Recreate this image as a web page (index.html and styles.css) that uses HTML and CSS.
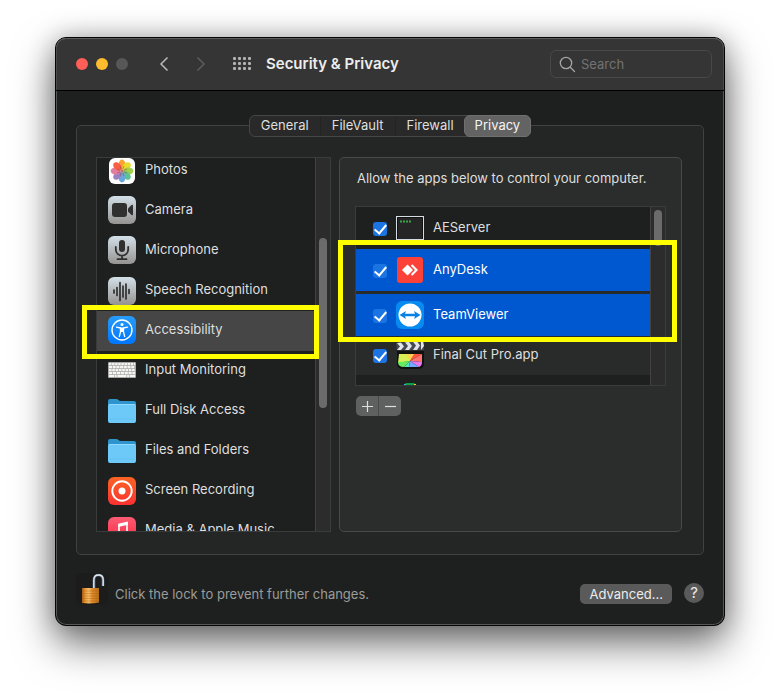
FILE: index.html
```html
<!DOCTYPE html>
<html lang="en">
<head>
<meta charset="utf-8">
<title>Security &amp; Privacy</title>
<link rel="stylesheet" href="styles.css">
</head>
<body>
<main class="window">
  <header class="titlebar">
    <div class="lights">
      <button class="light red" aria-label="Close"></button>
      <button class="light amber" aria-label="Minimize"></button>
      <button class="light off" aria-label="Zoom" disabled></button>
    </div>
    <div class="nav">
      <button class="plain" aria-label="Back"><svg width="10" height="16" viewBox="0 0 10 16"><path d="M8.500 1.500 2 8l6.500 6.500" fill="none" stroke="#b9b9b9" stroke-width="1.500"/></svg></button>
      <button class="plain" aria-label="Forward" disabled><svg width="10" height="16" viewBox="0 0 10 16"><path d="M1.500 1.500 8 8l-6.500 6.500" fill="none" stroke="#5d5d5d" stroke-width="1.500"/></svg></button>
    </div>
    <button class="plain" aria-label="Show All"><svg width="18" height="14" viewBox="0 0 18 14" fill="#b3b3b3"><g id="dots"><rect width="3" height="3" rx="1"/><rect x="5" width="3" height="3" rx="1"/><rect x="10" width="3" height="3" rx="1"/><rect x="15" width="3" height="3" rx="1"/></g><use href="#dots" y="5"/><use href="#dots" y="10"/></svg></button>
    <h1>Security &amp; Privacy</h1>
    <label class="search">
      <svg width="17" height="17" viewBox="0 0 17 17" fill="none" stroke="#a5a5a5" stroke-width="1.300" stroke-linecap="round"><circle cx="7" cy="7" r="5.700"/><path d="m11.300 11.300 4.200 4.200"/></svg>
      <input type="text" placeholder="Search" aria-label="Search">
    </label>
  </header>

  <div class="content">
    <nav class="tabs">
      <button>General</button><button>FileVault</button><button>Firewall</button><button class="active">Privacy</button>
    </nav>

    <section class="pane">
      <div class="sidebar">
        <ul class="categories">
          <li><button><svg class="low" width="28" height="28" viewBox="0 0 28 28"><rect x="1" y="1" width="26" height="26" rx="6" fill="#fff"/><g opacity=".9"><ellipse cx="14" cy="7.500" rx="3.400" ry="4.900" fill="#fb9a1c"/><ellipse cx="14" cy="7.500" rx="3.400" ry="4.900" fill="#e5d916" transform="rotate(45 14 14)"/><ellipse cx="14" cy="7.500" rx="3.400" ry="4.900" fill="#98cb35" transform="rotate(90 14 14)"/><ellipse cx="14" cy="7.500" rx="3.400" ry="4.900" fill="#4dbd83" transform="rotate(135 14 14)"/><ellipse cx="14" cy="7.500" rx="3.400" ry="4.900" fill="#559fda" transform="rotate(180 14 14)"/><ellipse cx="14" cy="7.500" rx="3.400" ry="4.900" fill="#9276bd" transform="rotate(225 14 14)"/><ellipse cx="14" cy="7.500" rx="3.400" ry="4.900" fill="#df7297" transform="rotate(270 14 14)"/><ellipse cx="14" cy="7.500" rx="3.400" ry="4.900" fill="#f94e35" transform="rotate(315 14 14)"/></g><path d="m14 14-2-5M14 14l2-5M14 14l5-2M14 14l5 2M14 14l-5-2M14 14l-5 2M14 14l2 5M14 14l-2 5" stroke="#933f35" stroke-opacity=".5"/></svg>Photos</button></li>
          <li><button><svg width="28" height="28" viewBox="0 0 28 28"><defs><linearGradient id="silver" x2="0" y2="1"><stop stop-color="#d3e0e8"/><stop offset="1" stop-color="#959391"/></linearGradient></defs><rect width="28" height="28" rx="6" fill="url(#silver)"/><rect x="4" y="7" width="15" height="14" rx="3" fill="#303030"/><path d="M20 12.500 23.500 9q1.500-1 1.500 1v8q0 2-1.500 1L20 15.500z" fill="#303030"/></svg>Camera</button></li>
          <li><button><svg width="28" height="28" viewBox="0 0 28 28"><rect width="28" height="28" rx="6" fill="url(#silver)"/><rect x="11" y="4" width="6" height="12" rx="3" fill="#303030"/><path d="M7.800 11v2.500a6.200 6.200 0 0 0 12.400 0V11M14 20v3M9.500 23.200h9" fill="none" stroke="#303030" stroke-width="1.800" stroke-linecap="round"/></svg>Microphone</button></li>
          <li><button><svg class="low" width="28" height="28" viewBox="0 0 28 28"><rect width="28" height="28" rx="6" fill="url(#silver)"/><path d="M6 13v3M9 10.500v8M12 5.500v18M15 9v11M18 7v15M21 12.500v4" stroke="#303030" stroke-width="1.700" stroke-linecap="round"/></svg>Speech Recognition</button></li>
          <li><button class="selected"><svg width="28" height="28" viewBox="0 0 28 28"><defs><linearGradient id="azure" x2="0" y2="1"><stop stop-color="#279cf8"/><stop offset="1" stop-color="#0076ff"/></linearGradient></defs><rect width="28" height="28" rx="6" fill="url(#azure)"/><circle cx="14" cy="14" r="10" fill="none" stroke="#fff" stroke-width="1.400"/><circle cx="14" cy="8.500" r="1.500" fill="#fff"/><path d="m8.500 11.200 4 .8v4L11.300 20.500M19.500 11.200l-4 .8v4l1.200 4.500" fill="none" stroke="#fff" stroke-width="1.300" stroke-linecap="round" stroke-linejoin="round"/><path d="M12 11.500h4v4.500h-4z" fill="#fff"/></svg>Accessibility</button></li>
          <li><button><svg width="28" height="16" viewBox="0 0 28 16"><rect width="28" height="16" rx="1" fill="#a9a9a7"/><g fill="none" stroke="#f6f6f4" stroke-width="2.200"><path d="M1 2.200h26" stroke-dasharray="2.400 .700"/><path d="M1 5.200h26" stroke-dasharray="3 .700"/><path d="M1 8.200h26" stroke-dasharray="2.600 .700"/><path d="M1 11.200h26" stroke-dasharray="3.200 .700"/><path d="M1 14h5m.700 0h2m.700 0h9m.700 0h2m.700 0h5.200" stroke-width="1.800"/></g></svg>Input Monitoring</button></li>
          <li><button><svg class="low" width="28" height="24" viewBox="0 0 28 24"><g id="folder"><path d="M0 2q0-2 2-2h6q1.500 0 2.500 1t2.500 1h13q2 0 2 2v6H0z" fill="#2e94cd"/><rect y="5" width="28" height="19" rx="2" fill="#6dc9f8"/><path d="M1 5.500h26" stroke="#90dbff"/><path d="M1 20h26" stroke="#62bdec" stroke-width=".700"/></g></svg>Full Disk Access</button></li>
          <li><button><svg class="low" width="28" height="24" viewBox="0 0 28 24"><use href="#folder"/></svg>Files and Folders</button></li>
          <li><button><svg class="low" width="28" height="28" viewBox="0 0 28 28"><defs><linearGradient id="ember" x2="0" y2="1"><stop stop-color="#fb6425"/><stop offset="1" stop-color="#fa3131"/></linearGradient></defs><rect width="28" height="28" rx="6" fill="url(#ember)"/><circle cx="14" cy="14" r="9.700" fill="none" stroke="#fff" stroke-width="1.900"/><circle cx="14" cy="14" r="3.500" fill="#fff"/></svg>Screen Recording</button></li>
          <li><button><svg class="low" width="28" height="28" viewBox="0 0 28 28"><defs><linearGradient id="rose" x2="0" y2="1"><stop stop-color="#fb5c74"/><stop offset="1" stop-color="#fa233b"/></linearGradient></defs><rect width="28" height="28" rx="6" fill="url(#rose)"/><path d="M11 20V8l8-2v12" fill="none" stroke="#fff" stroke-width="1.600"/><path d="M10.200 6.800 19.800 4.600v3.200l-9.600 2.200z" fill="#fff"/><circle cx="9" cy="20" r="2.500" fill="#fff"/><circle cx="17" cy="18" r="2.500" fill="#fff"/></svg>Media &amp; Apple Music</button></li>
        </ul>
        <div class="track"><div class="thumb"></div></div>
        <div class="marker marker-category"></div>
      </div>

      <div class="detail">
        <p>Allow the apps below to control your computer.</p>
        <div class="apps">
          <ul class="app-list">
            <li><label><input type="checkbox" checked><svg width="28" height="24" viewBox="0 0 28 24"><rect x=".500" y=".500" width="27" height="23" fill="#262626" stroke="#d5dde2"/><path d="M2 1.500h24M1.500 2v21M26.500 2v21" stroke="#111"/><path d="M4 5.500h11" stroke="#36a648" stroke-width="2" stroke-dasharray="2 1"/></svg>AEServer</label></li>
            <li class="chosen"><label><input type="checkbox" checked><svg width="28" height="28" viewBox="0 0 28 28"><rect x="1" y="1" width="26" height="26" rx="3" fill="#fc4138"/><path d="m11.500 8.500 5.500 5.500-5.500 5.500L6 14z" fill="#fff"/><path d="m14.800 9.800 1.500-1.500 5.700 5.700-5.700 5.700-1.500-1.500 4.200-4.200z" fill="#fff"/></svg>AnyDesk</label></li>
            <li class="chosen"><label><input type="checkbox" checked><svg width="28" height="28" viewBox="0 0 28 28"><rect width="28" height="28" rx="6" fill="#088bf0"/><circle cx="14" cy="14" r="11.500" fill="#fff"/><path d="m3.500 14 6.500-4-1 2.700h10L18 10l6.500 4-6.500 4 1-2.700H9l1 2.700z" fill="#0881e5"/></svg>TeamViewer</label></li>
            <li class="stripe"><label><input type="checkbox" checked><svg width="28" height="28" viewBox="0 0 28 28"><path d="M1 10h27v12q0 6-6 6H7q-6 0-6-6z" fill="#111"/><path d="M3 13h11v7L2 22z" fill="#d7ef55"/><path d="M14 20 10 13h9z" fill="#ffd24c"/><path d="m14 20 4-7h8z" fill="#fb5543"/><path d="m14 20 12-7v8z" fill="#ff756f"/><path d="m14 20 12 1q0 4-3 5z" fill="#e778ef"/><path d="m14 20 9 6H13z" fill="#74a7ff"/><path d="M14 20 13 26H8z" fill="#55e5c0"/><path d="m14 20-6 6q-6 0-6-5z" fill="#65ed62"/><path d="M0 2 27 0l1 9H1z" fill="#474953"/><path d="m1 2 4-.5 3 4-3 3.500H1l3-3.500zM9 1.200l4-.2 3 4-3 4H9l3-4zM17 .700l4-.200 3 4L21 9h-4l3-4.500zM25 0h2l1 5-3 4z" fill="#e1e4ea"/></svg>Final Cut Pro.app</label></li>
            <li class="partial"><svg width="12" height="12" viewBox="0 0 12 12"><rect width="12" height="12" rx="3" fill="#09a34a"/><path d="M0 1h2v2H0z" fill="#39b8d8"/><path d="M10 1h2v2h-2z" fill="#f4cf2e"/></svg></li>
          </ul>
          <div class="track"><div class="thumb"></div></div>
          <div class="marker marker-apps"></div>
        </div>
        <div class="edit">
          <button aria-label="Add"><svg width="11" height="11" viewBox="0 0 11 11"><path d="M5.500 0v11M0 5.500h11" stroke="#dedede" stroke-width="1.200"/></svg></button>
          <button aria-label="Remove"><svg width="11" height="11" viewBox="0 0 11 11"><path d="M0 5.500h11" stroke="#dedede" stroke-width="1.200"/></svg></button>
        </div>
      </div>
    </section>

    <footer>
      <button class="plain lock" aria-label="Lock"><svg width="32" height="32" viewBox="0 0 32 32"><defs><linearGradient id="brass"><stop stop-color="#a85c12"/><stop offset=".2" stop-color="#e89b38"/><stop offset=".4" stop-color="#f7bd68"/><stop offset=".6" stop-color="#dd8a2a"/><stop offset="1" stop-color="#b66f17"/></linearGradient></defs><rect width="32" height="32" rx="4" fill="#1c1c1c"/><path d="M18 15V7q0-5 4.500-5T27 7v6" fill="none" stroke="#627487" stroke-width="2.600"/><path d="M17.800 15V7q0-5 4.700-5t4.700 5v6" fill="none" stroke="#e4ebf1" stroke-width="1.300"/><path d="M6 15h17v14.500q-8 1.500-17 .5z" fill="url(#brass)"/><path d="M6 18h17M6 20.500h17M6 23h17M6 25.500h17M6 28h17" stroke="#a8600f" stroke-opacity=".4"/></svg></button>
      <span class="hint">Click the lock to prevent further changes.</span>
      <button class="advanced">Advanced...</button>
      <button class="help" aria-label="Help">?</button>
    </footer>
  </div>
</main>
</body>
</html>
```
FILE: styles.css
```css
* { box-sizing: border-box; }

body {
  margin: 0;
  padding: 37px 55px 72px;
  background: #fff;
  color: #dfdfdf;
  font: 13px/16px Inter, "Liberation Sans", sans-serif;
  overflow-x: hidden;
}

button, input { font: inherit; color: inherit; }
button { border: 0; padding: 0; background: none; }
ul { list-style: none; margin: 0; padding: 0; }
svg { display: block; flex: none; }

.window {
  border: 1px solid #050505;
  border-radius: 11px;
  background: #1e201f;
  box-shadow: inset 0 0 0 1px #565857, 0 18px 40px rgba(0, 0, 0, .55), 0 0 26px rgba(0, 0, 0, .25);
}

.titlebar {
  display: flex;
  align-items: center;
  height: 53px;
  padding: 0 12px 0 20px;
  border-bottom: 1px solid #000;
  border-radius: 10px 10px 0 0;
  background: #353535;
  box-shadow: inset 0 1px #5c5c5c, inset 1px 0 #4c4c4c, inset -1px 0 #4c4c4c;
}
.lights { display: flex; gap: 8px; }
.light { width: 12px; height: 12px; border-radius: 50%; }
.red { background: #ff5f57; }
.amber { background: #febc2e; }
.off { background: #575757; }
.nav { display: flex; gap: 27px; margin: 0 27px 0 31px; }
h1 { margin: 0 auto 0 15px; font-size: 15px; font-weight: 600; line-height: 20px; color: #ededed; }
.search {
  display: flex;
  align-items: center;
  gap: 5px;
  width: 162px;
  height: 28px;
  padding: 0 8px;
  border: 1px solid #484848;
  border-radius: 6px;
}
.search input { width: 100%; min-width: 0; border: 0; padding: 0; background: none; outline: 0; }
.search input::placeholder { color: #737373; opacity: 1; }

.content { padding: 24px 20px 20px; }

.tabs {
  position: relative;
  z-index: 1;
  display: flex;
  width: fit-content;
  height: 22px;
  margin: 0 auto -12px;
  border: 1px solid #454746;
  border-radius: 6px;
  background: #292929;
}
.tabs button { padding: 0 11px 2px; border-left: 1px solid #232323; }
.tabs button:first-child { border-left: 0; }
.tabs .active {
  margin: -1px;
  padding: 0 10px 2px;
  border: 1px solid #707070;
  border-radius: 6px;
  background: #636363;
  color: #f4f4f4;
}

.pane {
  display: flex;
  gap: 8px;
  padding: 31px 21px 22px 19px;
  border: 1px solid #404241;
  border-radius: 5px;
  background: #242625;
}

.sidebar {
  position: relative;
  display: flex;
  width: 235px;
  height: 375px;
  border: 1px solid #3a3c3b;
  background: #1e201f;
}
.categories { flex: 1; overflow: hidden; }
.categories li:first-child { margin-top: -7px; }
.categories button {
  display: flex;
  align-items: center;
  gap: 9px;
  width: 100%;
  height: 40px;
  padding: 0 0 4px 11px;
  text-align: left;
}
.categories svg { margin-top: 2px; }
.categories .low { margin-top: 4px; }
.categories .selected { background: #464646; }

.track {
  width: 15px;
  padding: 3px;
  border-left: 1px solid #414342;
  background: #2c2c2c;
}
.thumb { width: 8px; border-radius: 4px; background: #6b6b6b; }
.sidebar .thumb { height: 170px; margin-top: 77px; }
.apps .thumb { height: 36px; }

.marker {
  position: absolute;
  border: 5px solid #ffff00;
  pointer-events: none;
}
.marker-category { top: 147px; left: -15px; right: 11px; height: 54px; }
.marker-apps { top: 33px; left: -18px; right: -12px; height: 102px; }

.detail {
  flex: 1;
  padding: 12px 15px 0;
  border: 1px solid #484a49;
  border-radius: 5px;
  background: #2b2d2c;
}
.detail p { margin: 0 0 20px 2px; }

.apps {
  position: relative;
  display: flex;
  height: 180px;
  border: 1px solid #3a3c3b;
  background: #1e201f;
}
.app-list { flex: 1; overflow: hidden; }
.app-list label {
  display: flex;
  align-items: center;
  height: 42px;
  padding: 0 0 2px 17px;
}
.app-list svg { margin: 2px 9px 0; }
.app-list .chosen { background: #0058d0; color: #fff; }
.app-list .chosen + .chosen { border-top: 3px solid #292b2a; }
.app-list .stripe { background: #292b2a; }
.app-list .stripe label { height: 39px; padding-bottom: 4px; }
.app-list .partial { padding: 6px 0 0 39px; }

.app-list input {
  appearance: none;
  display: grid;
  place-items: center;
  width: 14px;
  height: 14px;
  margin: 4px 0 0;
  border-radius: 3px;
  background: #1b74e2;
}
.app-list input::before {
  content: "";
  width: 5px;
  height: 10px;
  margin-top: -2px;
  border: solid #fff;
  border-width: 0 2px 2px 0;
  transform: rotate(40deg);
}

.edit {
  display: flex;
  width: 45px;
  height: 20px;
  margin: 10px 0 0 1px;
  border-radius: 5px;
  background: #5f6160;
}
.edit button { flex: 1; display: grid; place-items: center; }
.edit button + button { border-left: 1px solid #484a49; }

footer { display: flex; align-items: center; margin-top: 18px; }
.lock { margin-right: 7px; }
.hint { margin: 10px auto 0 0; color: #9b9c9b; }
.advanced {
  height: 20px;
  margin: 10px 12px 0 0;
  padding: 0 9px 1px 10px;
  border-radius: 5px;
  background: #5a5a5a;
  color: #ececec;
}
.help {
  width: 20px;
  height: 20px;
  margin-top: 8px;
  border-radius: 50%;
  background: #5a5a5a;
  color: #ececec;
  font-size: 15px;
}
```
